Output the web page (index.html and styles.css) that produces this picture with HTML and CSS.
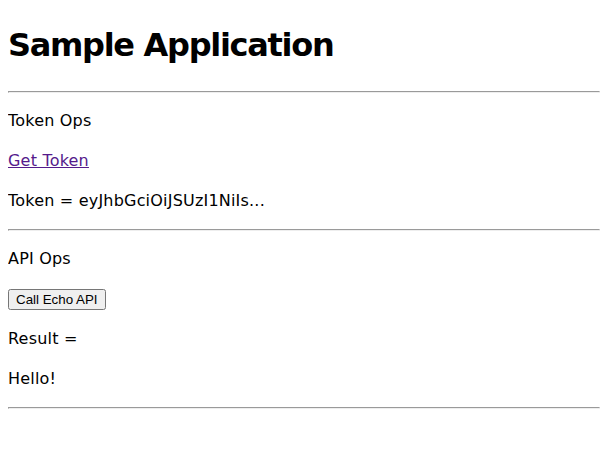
FILE: index.html
```html
<!DOCTYPE html>
<html lang="en">
<head>
    <meta charset="UTF-8">
    <meta name="viewport" content="width=device-width, initial-scale=1.0">
    <title>Sample Application</title>
    <link rel="stylesheet" href="styles.css">
</head>
<body>
    <h1>Sample Application</h1>
    <hr>
    <p>Token Ops</p>
    <p><a href="#" class="visited">Get Token</a></p>
    <p>Token = eyJhbGciOiJSUzI1NiIs...</p>
    <hr>
    <p>API Ops</p>
    <p><button type="button">Call Echo API</button></p>
    <p>Result = </p>
    <p>Hello!</p>
    <hr>
</body>
</html>
```

FILE: styles.css
```css
body {
    font-family: "DejaVu Sans", sans-serif;
    line-height: 1.5;
    letter-spacing: 0.2px;
    color: #000;
    margin: 0 0 8px 8px;
}
h1 {
    font-size: 32px;
    letter-spacing: -1.3px;
}
a.visited {
    color: #551a8b;
}
button {
    font-family: "Liberation Sans", Arial, sans-serif;
    font-size: 13.33px;
    line-height: normal;
    letter-spacing: 0;
    vertical-align: middle;
}
```
